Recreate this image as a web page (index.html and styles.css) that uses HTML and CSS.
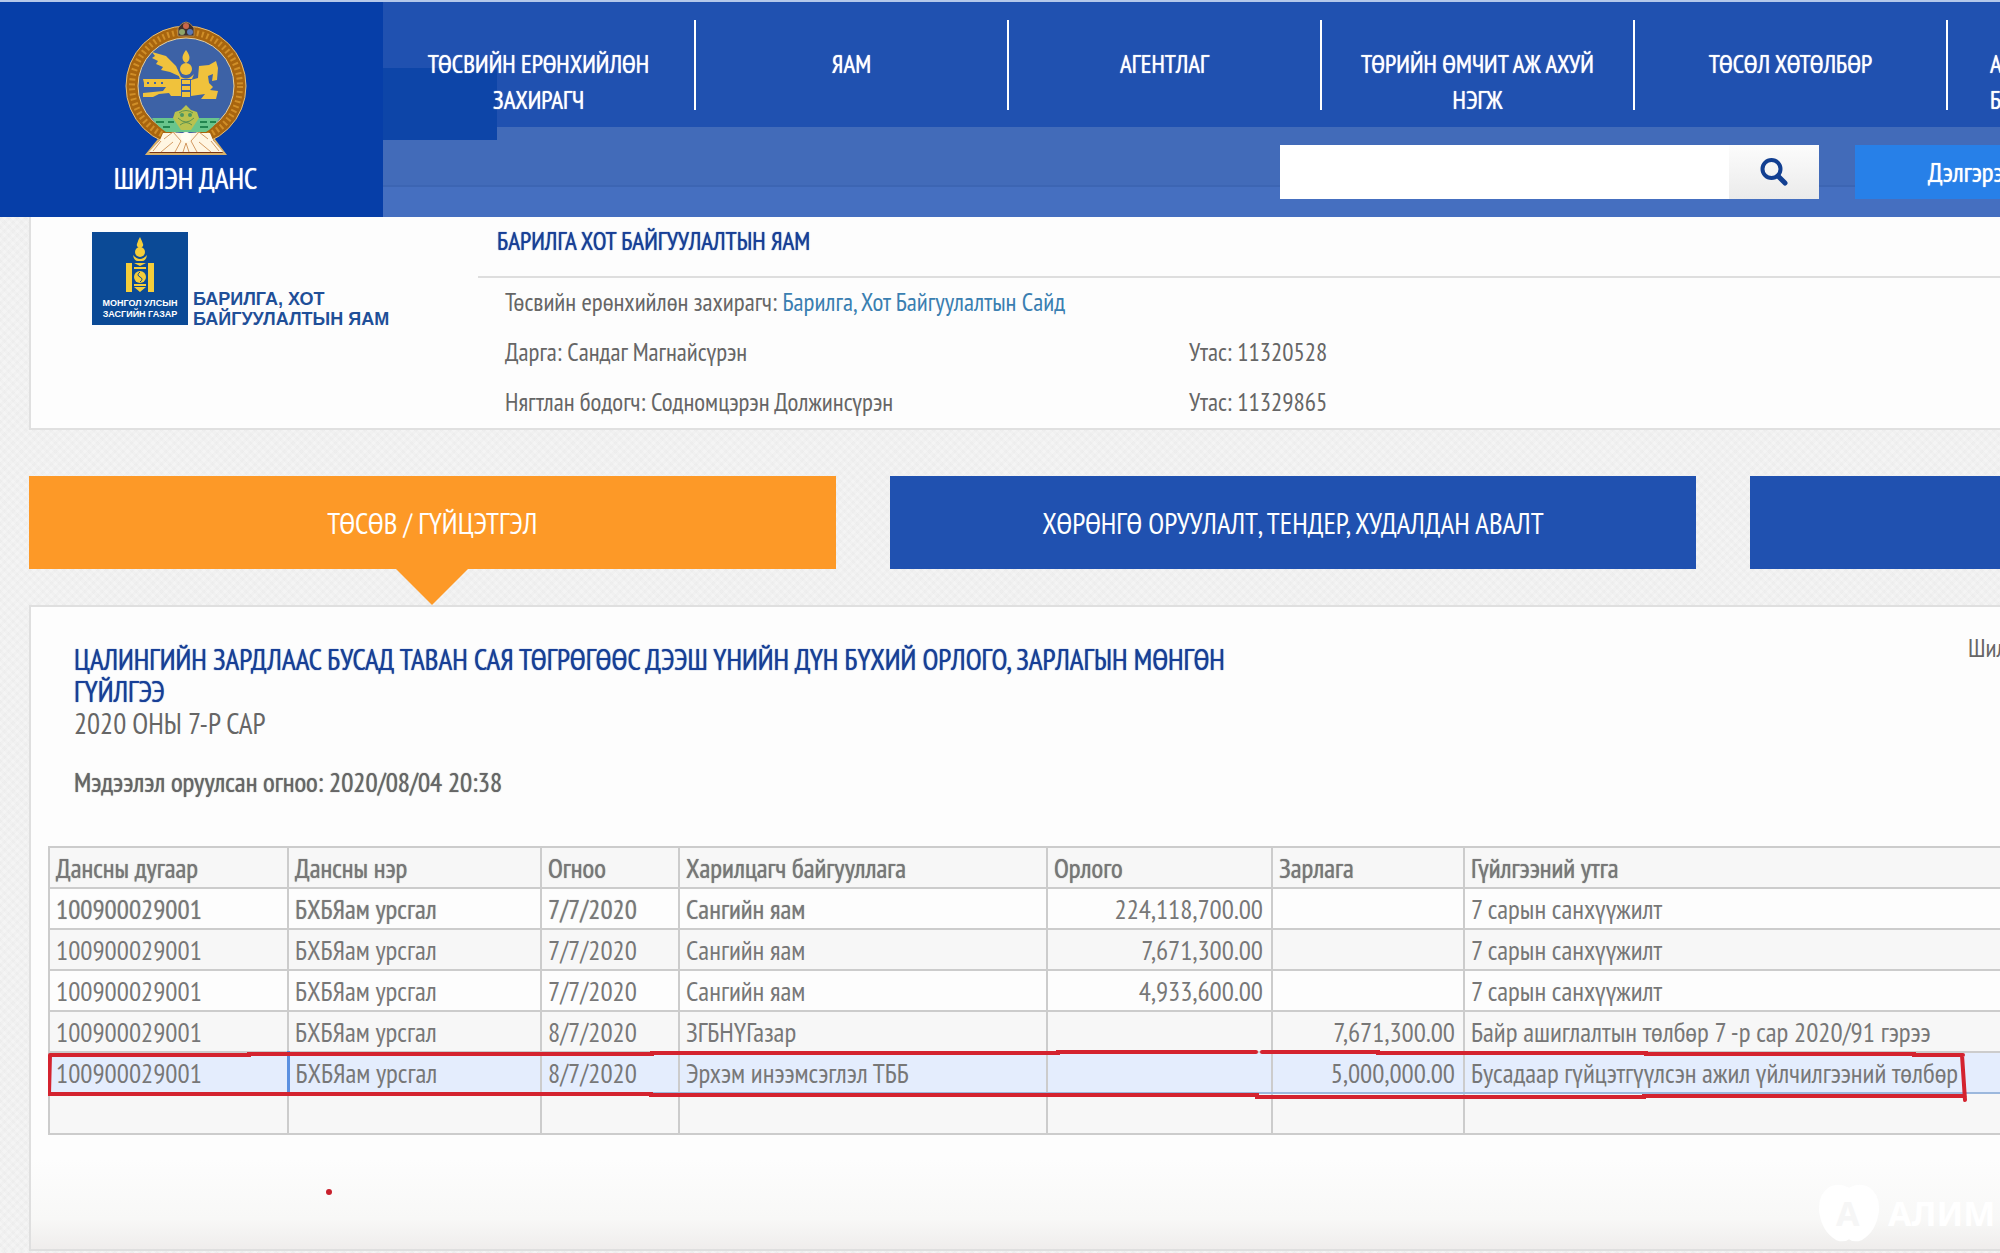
FILE: index.html
```html
<!DOCTYPE html>
<html lang="mn">
<head>
<meta charset="utf-8">
<title>Шилэн данс</title>
<link rel="stylesheet" href="styles.css">
</head>
<body>
<div class="page">
  <header class="header">
    <a class="brand" href="#">
      <svg class="emblem" viewBox="0 0 122 136" aria-hidden="true">
        <path d="M33 113 H89 L88 118 L100 134 H22 L35 118Z" fill="#7a3516" stroke="#d9b26a" stroke-width="2"/>
        <circle cx="61" cy="66" r="54" fill="#3d62a6" stroke="#a8650f" stroke-width="12"/>
        <circle cx="61" cy="66" r="60" fill="none" stroke="#e0bd7c" stroke-width="1"/>
        <circle cx="61" cy="66" r="54" fill="none" stroke="#d08e28" stroke-width="6" stroke-dasharray="2 3"/>
        <circle cx="61" cy="66" r="48" fill="none" stroke="#ead09a" stroke-width="1"/>
        <path d="M27 98 H95 Q88 108 81 112 H41 Q32 106 27 98Z" fill="#69c58c"/>
        <path d="M31 102h8m4 0h6m26 0h7m3 0h6M38 107h7m30 0h8" stroke="#22854f" stroke-width="2" fill="none"/>
        <path d="M61 85l5 5 6 2 2 6-4 6-4 6H56l-4-6-4-6 2-6 6-2z" fill="#b9c24f"/>
        <path d="M54 93q7-5 14 0M53 98q8 8 16 0M55 105q6-5 12 0" stroke="#5f9350" stroke-width="1" fill="none"/>
        <circle cx="57" cy="95" r="2" fill="#4e9660"/><circle cx="65" cy="95" r="2" fill="#4e9660"/>
        <path d="M38 113H85L88 120 98 132H24L35 120Z" fill="#fff6e2"/>
        <path d="M48 112l-9 7M48 122l-12 10M48 112l8 9-6 11M74 112l-8 9 6 11M74 112l9 7M74 122l12 10M61 123l-3 9M61 123l3 9M36 121l-8 10M86 121l8 10" stroke="#d39a62" stroke-width="1" fill="none"/>
        <circle cx="61" cy="117" r="5" fill="#fffdf2"/>
        <path d="M27 32L41 36 51 46 56 57 45 52 36 50 38 47 31 44 33 41 27 38 30 36Z" fill="#f0c23c"/>
        <path d="M18 59H56V76H46L44 73 34 74 28 77H18V73L38 71 41 67H19V63Z" fill="#f0c23c"/>
        <path d="M22 63h2m5 0h2m5 0h2" stroke="#3d66ad" stroke-width="2"/>
        <path d="M66 60L73 58 74 46 84 45 91 41 93 48 92 60 87 61 88 54 83 56 84 63 88 67 85 70 93 71 91 79H76L80 74 66 76Z" fill="#f0c23c"/>
        <path d="M61 30Q68 39 61 43 54 39 61 30ZM53 54q8 9 16 0l-2 5H55zM57 60h8v4h-8zm0 6h8v4h-8zm0 6h8v5h-8z" fill="#f0c23c"/>
        <circle cx="61" cy="49" r="6" fill="#f0c23c"/>
        <path d="M53 16V8Q61-4 69 8V16Z" fill="#3e2f2c" stroke="#a98452" stroke-width="1"/>
        <circle cx="61" cy="6" r="3" fill="#c9674a"/><circle cx="57" cy="12" r="3" fill="#8fa56a"/><circle cx="65" cy="12" r="3" fill="#5878b8"/>
      </svg>
      <span class="brand-name">ШИЛЭН ДАНС</span>
    </a>
    <div class="header-main">
      <nav class="nav">
        <a class="nav-item" href="#">ТӨСВИЙН ЕРӨНХИЙЛӨН ЗАХИРАГЧ</a>
        <a class="nav-item" href="#">ЯАМ</a>
        <a class="nav-item" href="#">АГЕНТЛАГ</a>
        <a class="nav-item" href="#">ТӨРИЙН ӨМЧИТ АЖ АХУЙ НЭГЖ</a>
        <a class="nav-item" href="#">ТӨСӨЛ ХӨТӨЛБӨР</a>
        <a class="nav-item nav-item-last" href="#">А<br>БҮ</a>
      </nav>
      <div class="tools">
        <form class="search">
          <input class="search-input" type="search" aria-label="Хайх">
          <button class="search-button" type="button" aria-label="Хайх">
            <svg class="search-icon" viewBox="0 0 28 28"><circle cx="11.500" cy="11" r="9" fill="none" stroke="#123f91" stroke-width="4"/><path d="M18 18L25 25" stroke="#123f91" stroke-width="5" stroke-linecap="round"/></svg>
          </button>
        </form>
        <button class="advanced" type="button">Дэлгэрэнгүй</button>
      </div>
    </div>
  </header>

  <main class="content">
    <section class="ministry">
      <div class="ministry-logo">
        <div class="state-mark">
          <svg class="soyombo" viewBox="0 0 30 56" aria-hidden="true">
            <g fill="#f5cd3a"><path d="M1 26h6v29H1zM23 26h6v29h-6zM15 0q2 4 3 7 1 3-3 4-4-1-3-4 1-4 3-7z"/><circle cx="15" cy="15" r="5"/><path d="M8 18q7 8 14 0-1 6-5 6h-4q-4 0-5-6zM9 26h12l-6 3zM9 30h12v2H9zM9 47h12v2H9zM9 50h12l-6 5z"/><circle cx="15" cy="40" r="6"/></g>
            <path d="M15 35q-4 3 0 5t0 5" fill="none" stroke="#0b4a96"/>
          </svg>
          <span>МОНГОЛ УЛСЫН<br>ЗАСГИЙН ГАЗАР</span>
        </div>
        <div class="ministry-name">БАРИЛГА, ХОТ<br>БАЙГУУЛАЛТЫН ЯАМ</div>
      </div>
      <div class="ministry-info">
        <h1 class="ministry-title">БАРИЛГА ХОТ БАЙГУУЛАЛТЫН ЯАМ</h1>
        <div class="facts">
          <p class="fact-wide">Төсвийн ерөнхийлөн захирагч: <a class="fact-link" href="#">Барилга, Хот Байгуулалтын Сайд</a></p>
          <p>Дарга: Сандаг Магнайсүрэн</p><p>Утас: 11320528</p>
          <p>Нягтлан бодогч: Содномцэрэн Должинсүрэн</p><p>Утас: 11329865</p>
        </div>
      </div>
    </section>

    <nav class="tabs">
      <a class="tab tab-active" href="#">ТӨСӨВ / ГҮЙЦЭТГЭЛ</a>
      <a class="tab" href="#">ХӨРӨНГӨ ОРУУЛАЛТ, ТЕНДЕР, ХУДАЛДАН АВАЛТ</a>
      <a class="tab" href="#" aria-label="Бусад"></a>
    </nav>

    <section class="report">
      <div class="report-head">
        <div class="report-text">
          <h2 class="report-title">ЦАЛИНГИЙН ЗАРДЛААС БУСАД ТАВАН САЯ ТӨГРӨГӨӨС ДЭЭШ ҮНИЙН ДҮН БҮХИЙ ОРЛОГО, ЗАРЛАГЫН МӨНГӨН ГҮЙЛГЭЭ</h2>
          <p class="report-period">2020 ОНЫ 7-Р САР</p>
          <p class="report-date">Мэдээлэл оруулсан огноо: 2020/08/04 20:38</p>
        </div>
        <p class="report-side">Шил</p>
      </div>
      <div class="ledger-wrap">
        <table class="ledger">
          <colgroup><col class="c-account"><col class="c-name"><col class="c-date"><col class="c-party"><col class="c-in"><col class="c-out"><col></colgroup>
          <thead><tr><th>Дансны дугаар</th><th>Дансны нэр</th><th>Огноо</th><th>Харилцагч байгууллага</th><th>Орлого</th><th>Зарлага</th><th>Гүйлгээний утга</th></tr></thead>
          <tbody>
            <tr class="strong"><td>100900029001</td><td>БХБЯам урсгал</td><td>7/7/2020</td><td>Сангийн яам</td><td class="num">224,118,700.00</td><td></td><td>7 сарын санхүүжилт</td></tr>
            <tr><td>100900029001</td><td>БХБЯам урсгал</td><td>7/7/2020</td><td>Сангийн яам</td><td class="num">7,671,300.00</td><td></td><td>7 сарын санхүүжилт</td></tr>
            <tr><td>100900029001</td><td>БХБЯам урсгал</td><td>7/7/2020</td><td>Сангийн яам</td><td class="num">4,933,600.00</td><td></td><td>7 сарын санхүүжилт</td></tr>
            <tr><td>100900029001</td><td>БХБЯам урсгал</td><td>8/7/2020</td><td>ЗГБНҮГазар</td><td></td><td class="num">7,671,300.00</td><td>Байр ашиглалтын төлбөр 7 -р сар 2020/91 гэрээ</td></tr>
            <tr class="selected"><td class="cell-focus">100900029001</td><td>БХБЯам урсгал</td><td>8/7/2020</td><td>Эрхэм инээмсэглэл ТББ</td><td></td><td class="num">5,000,000.00</td><td>Бусадаар гүйцэтгүүлсэн ажил үйлчилгээний төлбөр</td></tr>
            <tr><td></td><td></td><td></td><td></td><td></td><td></td><td></td></tr>
          </tbody>
        </table>
        <svg class="marks" width="1930" height="360" viewBox="0 0 1930 360" aria-hidden="true">
          <g fill="none" stroke="#d4232f" stroke-width="4" stroke-linecap="round">
            <path d="M2 209H201V208H604V207H1010V206H1208M1214 206H1330V207H1598V208H1866V209H1915M2 209L1 248H603V249H1209V251H1596V250H1917M1914 209L1917 254"/>
          </g>
          <circle cx="281" cy="346" r="3" fill="#c8202c"/>
        </svg>
      </div>
      <div class="watermark">
        <svg class="watermark-logo" viewBox="0 0 64 60" aria-hidden="true"><path d="M32 4Q42-2 52 3 64 10 63 28 60 50 45 58 37 61 32 57 27 61 19 58 4 50 1 28 0 10 12 3 22-2 32 4Z" fill="#fff"/></svg>
        <span class="watermark-letter">А</span>
        <span class="watermark-name">АЛИМ</span>
      </div>
    </section>
  </main>
</div>
</body>
</html>
```
FILE: styles.css
```css
* { box-sizing: border-box; }

body {
  margin: 0;
  overflow-x: hidden;
  background-color: #f0f0f0;
  background-image:
    repeating-linear-gradient(45deg, #ffffff22 0 3px, #e6e6e622 3px 6px),
    repeating-linear-gradient(135deg, #ffffff22 0 3px, #e6e6e622 3px 6px);
  color: #666;
  font: 25px/32px "PT Sans Narrow", "Roboto Condensed", sans-serif;
}

h1, h2, p { margin: 0; font-weight: 400; }
a { color: inherit; text-decoration: none; }
button { border: 0; padding: 0; font: inherit; cursor: pointer; }

/* The sheet is wider than the window and is cut at its right edge. */
.page { width: 130%; }

.header { display: flex; border-top: 2px solid #b4c8ea; background: #426cbb; }

.brand {
  display: flex;
  flex-direction: column;
  align-items: center;
  flex: 0 0 383px;
  padding: 18px 12px 0 0;
  background: #063ea8;
  color: #fff;
}
.emblem { width: 122px; height: 136px; }
.brand-name { font-size: 29px; line-height: 40px; margin-top: 2px; text-shadow: 0 0 1px #fff; }

.header-main { flex: 1; min-width: 0; }

.nav {
  display: flex;
  height: 125px;
  padding-top: 18px;
  background: linear-gradient(#0d45a8, #0d45a8) 0 66px / 114px 59px no-repeat #2051b0;
}
.nav-item {
  flex: 0 0 313px;
  height: 90px;
  padding: 26px 34px 0;
  border-right: 2px solid #fff;
  color: #fff;
  line-height: 36px;
  text-align: center;
  text-shadow: 0 0 1px #fff;
}
.nav-item-last { padding-left: 42px; text-align: left; }

.tools {
  display: flex;
  gap: 36px;
  height: 90px;
  padding: 18px 0 18px 897px;
  background:
    linear-gradient(#0d45a8, #0d45a8) 0 0 / 114px 13px no-repeat,
    linear-gradient(#426bb9 0 58px, #3c65b3 58px 60px, #456fc0 60px);
}
.search { display: flex; flex: 0 0 539px; background: #fff; }
.search-input { flex: 1; min-width: 0; border: 0; padding: 0 16px; background: #fff; font: inherit; }
.search-button {
  display: flex;
  align-items: center;
  justify-content: center;
  flex: 0 0 90px;
  background: linear-gradient(#fcfcfc, #ebebeb);
}
.search-icon { width: 28px; height: 28px; }
.advanced {
  flex: 0 0 260px;
  padding-left: 73px;
  background: #2780e8;
  color: #fff;
  font-size: 27px;
  text-align: left;
  text-shadow: 0 0 1px #fff;
}

.content { padding: 0 43px 0 29px; }

.ministry {
  display: flex;
  height: 213px;
  border: 2px solid #e0e0e0;
  border-top: 0;
  background: #fdfdfd;
}
.ministry-logo { display: flex; align-items: flex-start; gap: 5px; flex: 0 0 447px; padding: 15px 0 0 61px; }
.state-mark {
  display: flex;
  flex-direction: column;
  align-items: center;
  flex: 0 0 96px;
  height: 93px;
  padding-top: 5px;
  background: #0b4a96;
  color: #fff;
  font: bold 9px/11px "Liberation Sans", sans-serif;
  text-align: center;
  white-space: nowrap;
}
.soyombo { width: 30px; height: 56px; margin-bottom: 5px; }
.ministry-name {
  padding-top: 57px;
  color: #1f4f98;
  font: bold 18px/20px "Liberation Sans", sans-serif;
  white-space: nowrap;
}

.ministry-info { flex: 1; }
.ministry-title {
  height: 61px;
  padding: 8px 19px;
  border-bottom: 2px solid #dedede;
  color: #173f97;
  font-size: 25px;
  line-height: 32px;
  text-shadow: 0 0 1px #173f97;
}
.facts { display: grid; grid-template-columns: 684px 1fr; padding-left: 27px; line-height: 50px; margin-top: -1px; }
.fact-wide { grid-column: 1 / -1; }
.fact-link { color: #3a7fb1; }

.tabs { display: grid; grid-template-columns: repeat(3, 1fr); gap: 54px; padding: 46px 0 36px; }
.tab {
  position: relative;
  display: flex;
  align-items: center;
  justify-content: center;
  height: 93px;
  background: #2051b0;
  color: #fff;
  font-size: 29px;
}
.tab-active { background: #fd9927; }
.tab-active::after {
  content: "";
  position: absolute;
  top: 100%;
  left: 50%;
  margin-left: -36px;
  border: 36px solid transparent;
  border-top-color: #fd9927;
  border-bottom: 0;
}

.report {
  position: relative;
  min-height: 646px;
  border: 2px solid #dfdfdf;
  background: linear-gradient(#fdfdfd calc(100% - 90px), #f8f8f7 calc(100% - 30px), #efedec);
}
.report-head { display: flex; justify-content: space-between; padding: 36px 0 0 43px; }
.report-text { flex: 0 0 1170px; }
.report-title { color: #173f97; font-size: 29px; line-height: 32px; text-shadow: 0 0 1px #173f97; }
.report-period { font-size: 29px; }
.report-date { margin-top: 27px; font-size: 27px; text-shadow: 0 0 1px #666; }
.report-side { flex: 0 0 587px; line-height: 10px; }

.ledger-wrap { position: relative; margin: 48px 0 0 17px; }
.ledger { width: 100%; table-layout: fixed; border-collapse: collapse; background: #fdfdfd; color: #777; font-size: 27px; }
.c-account { width: 239px; }
.c-name { width: 253px; }
.c-date { width: 138px; }
.c-party { width: 368px; }
.c-in { width: 225px; }
.c-out { width: 192px; }
.ledger th, .ledger td {
  height: 41px;
  padding: 0 8px 0 6px;
  border: 2px solid #ccc;
  font-weight: 400;
  line-height: 36px;
  text-align: left;
  white-space: nowrap;
}
.ledger th { text-shadow: 0 0 1px #777; }
.ledger tr:nth-child(even) td, .ledger th { background: #f7f7f7; }
.ledger .strong td:nth-child(-n+4) { text-shadow: 0 0 1px #aaa; }
.ledger .selected td { background: #e4edfd; border-top-color: #9cb8dd; border-bottom-color: #9cb8dd; }
.ledger .selected .cell-focus { border-right: 3px solid #5b90e0; }
.ledger .num { text-align: right; }

.marks { position: absolute; top: 0; left: 0; pointer-events: none; }

.watermark {
  position: absolute;
  left: 1787px;
  bottom: 6px;
  display: flex;
  align-items: center;
  gap: 8px;
  color: #fff;
  font: bold 34px/60px "Noto Sans", sans-serif;
}
.watermark-logo { width: 62px; height: 60px; }
.watermark-letter { position: absolute; left: 18px; color: #f6f6f6; }
```
